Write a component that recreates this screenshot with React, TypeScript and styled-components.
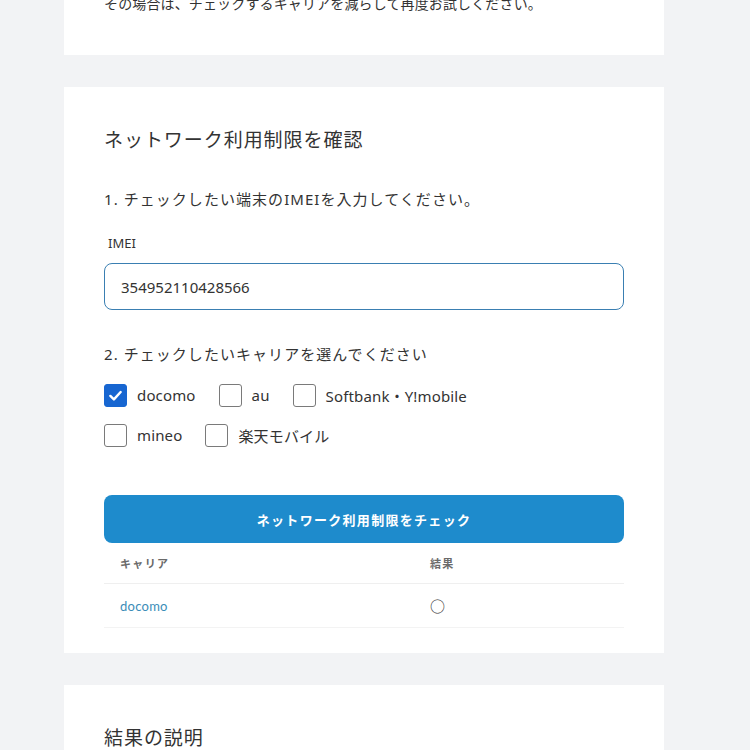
import React, { useState } from 'react';
import styled, { createGlobalStyle } from 'styled-components';

const GlobalStyle = createGlobalStyle`
  html, body {
    margin: 0;
    padding: 0;
    background: #f2f3f5;
    font-family: "Noto Sans", "Noto Sans CJK JP", sans-serif;
    color: #333;
  }
`;

const Page = styled.div`
  width: 600px;
  margin: -8px 0 0 64px;
  display: flex;
  flex-direction: column;
  gap: 32px;
`;

const Card = styled.section<{ $pt?: number; $pb?: number }>`
  background: #fff;
  padding: ${(p) => p.$pt ?? 38}px 40px ${(p) => p.$pb ?? 25}px;
`;

const Note = styled.p`
  margin: 0;
  font-size: 14px;
  line-height: 24px;
  letter-spacing: 0.01em;
`;

const Heading = styled.h2`
  margin: 0;
  font-size: 19px;
  font-weight: 400;
  line-height: 30px;
  letter-spacing: 0.05em;
`;

const Step = styled.p<{ $mt: number }>`
  margin: ${(p) => p.$mt}px 0 0;
  font-size: 15px;
  line-height: 24px;
  letter-spacing: 0.07em;
`;

const Label = styled.label`
  display: block;
  margin: 22px 0 0 4px;
  font-size: 13px;
  line-height: 20px;
`;

const Input = styled.input`
  box-sizing: border-box;
  display: block;
  width: 100%;
  height: 47px;
  margin-top: 10px;
  padding: 0 16px;
  border: 1px solid #3a7fb2;
  border-radius: 8px;
  font-family: "Noto Sans", sans-serif;
  font-size: 15px;
  color: #333;
  outline: none;
`;

const Options = styled.div`
  margin-top: 17px;
  display: flex;
  flex-direction: column;
  gap: 16px;
`;

const OptionRow = styled.div`
  display: flex;
  align-items: center;
  gap: 23px;
`;

const Option = styled.label`
  display: flex;
  align-items: center;
  gap: 10px;
  height: 24px;
  font-size: 15px;
  letter-spacing: 0.01em;
  cursor: pointer;
`;

const Box = styled.span<{ $on: boolean }>`
  box-sizing: border-box;
  width: 23px;
  height: 23px;
  border-radius: 3px;
  border: 1px solid ${(p) => (p.$on ? '#1766d1' : '#7a7a7a')};
  background: ${(p) => (p.$on ? '#1766d1' : '#fff')};
  display: flex;
  align-items: center;
  justify-content: center;
`;

const Button = styled.button`
  display: block;
  width: 100%;
  height: 48px;
  margin-top: 48px;
  border: none;
  border-radius: 8px;
  background: #1e8bcc;
  color: #fff;
  font-family: "Noto Sans CJK JP", sans-serif;
  font-size: 13px;
  font-weight: 700;
  letter-spacing: 0.1em;
`;

const Table = styled.div`
  display: grid;
  grid-template-columns: 310px 1fr;
`;

const HeadCell = styled.div`
  height: 40px;
  padding: 0 16px;
  display: flex;
  align-items: center;
  border-bottom: 1px solid #efefef;
  font-family: "Noto Sans CJK JP", sans-serif;
  font-size: 11px;
  font-weight: 700;
  color: #6a6a6a;
  letter-spacing: 0.12em;
`;

const Cell = styled.div<{ $link?: boolean }>`
  height: 43px;
  padding: 0 16px;
  display: flex;
  align-items: center;
  border-bottom: 1px solid #f3f3f3;
  font-family: ${(p) => (p.$link ? 'Lato, "Noto Sans", sans-serif' : '"Noto Sans CJK JP", sans-serif')};
  font-size: ${(p) => (p.$link ? 13 : 15)}px;
  color: ${(p) => (p.$link ? '#3b8db8' : '#333')};
  letter-spacing: 0.02em;
`;

const Check = () => (
  <svg width="15" height="15" viewBox="0 0 16 16" fill="none">
    <path d="M2.5 8.5 L6.3 12.2 L13.5 4.3" stroke="#fff" strokeWidth="2.6" strokeLinecap="round" strokeLinejoin="round" />
  </svg>
);

const rows = [
  ['docomo', 'au', 'Softbank・Y!mobile'],
  ['mineo', '楽天モバイル'],
];

export default function App() {
  const [checked, setChecked] = useState<Record<string, boolean>>({ docomo: true });
  const toggle = (name: string) => setChecked((c) => ({ ...c, [name]: !c[name] }));

  return (
    <>
      <GlobalStyle />
      <Page>
        <Card $pt={0} $pb={39}>
          <Note>その場合は、チェックするキャリアを減らして再度お試しください。</Note>
        </Card>

        <Card>
          <Heading>ネットワーク利用制限を確認</Heading>
          <Step $mt={32}>1. チェックしたい端末のIMEIを入力してください。</Step>
          <Label htmlFor="imei">IMEI</Label>
          <Input id="imei" defaultValue="354952110428566" />
          <Step $mt={32}>2. チェックしたいキャリアを選んでください</Step>
          <Options>
            {rows.map((row, i) => (
              <OptionRow key={i}>
                {row.map((name) => (
                  <Option key={name} onClick={() => toggle(name)}>
                    <Box $on={!!checked[name]}>{checked[name] && <Check />}</Box>
                    {name}
                  </Option>
                ))}
              </OptionRow>
            ))}
          </Options>
          <Button>ネットワーク利用制限をチェック</Button>
          <Table>
            <HeadCell>キャリア</HeadCell>
            <HeadCell>結果</HeadCell>
            <Cell $link>docomo</Cell>
            <Cell>○</Cell>
          </Table>
        </Card>

        <Card $pt={38}>
          <Heading>結果の説明</Heading>
        </Card>
      </Page>
    </>
  );
}
